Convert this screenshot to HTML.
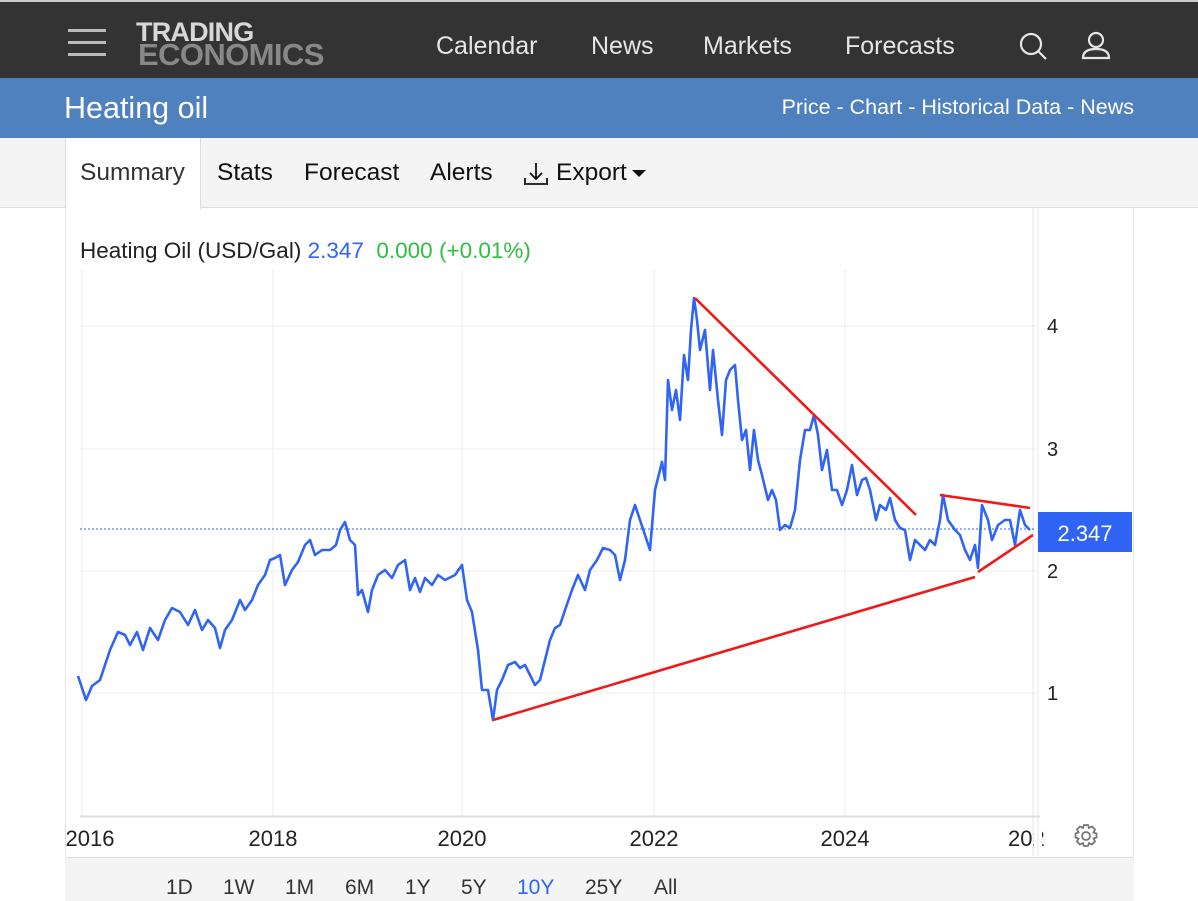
<!DOCTYPE html>
<html><head><meta charset="utf-8"><style>
*{margin:0;padding:0;box-sizing:border-box}
body{width:1198px;height:901px;overflow:hidden;background:#fff;font-family:"Liberation Sans",Arial,sans-serif;position:relative}
.top{position:absolute;left:0;top:0;width:1198px;height:78px;background:#333}
.nav{position:absolute;top:32px;font-size:25px;color:#e6e6e6}
.blue{position:absolute;left:0;top:78px;width:1198px;height:60px;background:#4e81bd}
.tabs{position:absolute;left:0;top:138px;width:1198px;height:70px;background:#f4f4f4;border-bottom:1px solid #ddd}
.tab{position:absolute;top:21px;font-size:24.5px;color:#111}
.rng{position:absolute;left:65px;top:857px;width:1069px;height:44px;background:#f4f4f4;border-top:1px solid #e0e0e0}
.rng span{position:absolute;top:18px;font-size:21px;color:#333}
</style></head><body>
<div class="top">
 <div style="position:absolute;left:0;top:0;width:1198px;height:2px;background:#ccc"></div>
 <div style="position:absolute;left:68px;top:29px;width:38px;height:3px;background:#bbb;box-shadow:0 12px 0 #bbb,0 24px 0 #bbb"></div>
 <div style="position:absolute;left:136px;top:20px;font-size:27px;font-weight:bold;color:#d8d8d8;line-height:24px;letter-spacing:-0.8px">TRADING</div>
 <div style="position:absolute;left:138px;top:42px;font-size:31px;font-weight:bold;color:#888;line-height:26px;letter-spacing:-0.6px">ECONOMICS</div>
 <div class="nav" style="left:436px">Calendar</div>
 <div class="nav" style="left:591px">News</div>
 <div class="nav" style="left:703px">Markets</div>
 <div class="nav" style="left:845px">Forecasts</div>
 <svg style="position:absolute;left:1018px;top:31px" width="32" height="32" viewBox="0 0 32 32" fill="none" stroke="#e6e6e6" stroke-width="2.2"><circle cx="13" cy="13" r="10"/><path d="M20 20l8 8"/></svg>
 <svg style="position:absolute;left:1080px;top:31px" width="32" height="30" viewBox="0 0 32 30" fill="none" stroke="#e6e6e6" stroke-width="2.2"><circle cx="16" cy="9" r="7"/><path d="M3 27c0-7 6-9 13-9s13 2 13 9z"/></svg>
</div>
<div class="blue">
 <div style="position:absolute;left:64px;top:13px;font-size:30.5px;color:#fff">Heating oil</div>
 <div style="position:absolute;right:64px;top:17px;font-size:21.5px;color:#fff">Price - Chart - Historical Data - News</div>
</div>
<div class="tabs">
 <div style="position:absolute;left:65px;top:0;width:136px;height:71px;background:#fff;border-left:1px solid #ddd;border-right:1px solid #ddd"></div>
 <div class="tab" style="left:80px;color:#333">Summary</div>
 <div class="tab" style="left:217px">Stats</div>
 <div class="tab" style="left:304px">Forecast</div>
 <div class="tab" style="left:430px">Alerts</div>
 <svg style="position:absolute;left:523px;top:23px" width="26" height="26" viewBox="0 0 26 26" fill="none" stroke="#111" stroke-width="1.8"><path d="M13 2v16M7 12l6 6 6-6M2 17v6h22v-6"/></svg>
 <div class="tab" style="left:556px">Export</div>
 <div style="position:absolute;left:632px;top:32px;border-left:7px solid transparent;border-right:7px solid transparent;border-top:7px solid #111"></div>
</div>
<div style="position:absolute;left:65px;top:208px;width:1px;height:649px;background:#e4e4e4"></div>
<div style="position:absolute;left:1133px;top:208px;width:1px;height:649px;background:#e4e4e4"></div>
<div style="position:absolute;left:80px;top:238px;font-size:22.5px;color:#222">Heating Oil (USD/Gal) <span style="color:#2f64f5">2.347</span>&nbsp; <span style="color:#2fbf3f">0.000 (+0.01%)</span></div>
<svg style="position:absolute;left:0;top:0" width="1198" height="901">
 <g stroke="#ececec" stroke-width="1">
  <path d="M80 326H1036M80 449H1036M80 571H1036M80 693H1036"/>
  <path d="M82 270V816M273 270V816M462 270V816M654 270V816M845 270V816"/>
 </g>
 <path d="M80 816.5H1040" stroke="#ddd" stroke-width="2"/>
 <path d="M1033 208V856M1038 208V856" stroke="#e4e4e4"/>
 <path d="M80 529H1036" stroke="#2f64f5" stroke-dasharray="2 2" stroke-width="1"/>
 <polyline fill="none" stroke="#2f64f5" stroke-width="2.6" stroke-linejoin="round" points="78,676 86,700 92,686 100,680 105,665 110,650 118,632 125,635 130,645 137,632 143,650 150,628 158,640 165,620 172,608 180,612 188,625 195,610 202,630 208,620 215,628 220,648 225,630 232,620 240,600 245,610 252,600 258,585 265,575 270,560 275,558 280,555 285,585 292,570 298,562 305,545 310,540 315,555 322,550 330,550 336,545 340,530 345,522 350,540 355,545 358,595 362,590 368,612 372,590 378,575 385,570 392,578 398,565 405,560 410,590 415,578 420,592 425,578 432,585 438,575 445,580 455,575 462,565 467,600 472,612 478,650 482,690 488,690 493,720 497,690 502,680 508,665 515,662 520,668 525,665 530,675 535,685 540,680 545,660 550,640 555,628 560,625 565,610 572,590 578,575 585,590 590,570 597,560 603,548 610,550 615,555 620,580 625,560 630,520 635,505 640,520 645,535 650,550 655,490 662,462 665,480 668,380 672,410 676,390 680,420 684,355 688,380 691,330 694,298 697,320 700,350 705,330 710,390 713,350 718,400 722,435 726,380 730,370 735,365 738,400 742,440 746,430 750,470 754,430 758,460 762,475 768,500 772,490 776,500 780,530 785,525 790,528 795,510 800,460 805,430 810,430 814,415 818,435 822,470 827,450 832,490 837,490 842,505 847,490 852,465 857,495 862,480 866,478 870,490 876,520 880,505 886,510 890,498 895,520 900,528 905,530 910,560 915,540 920,545 925,550 930,540 935,545 940,520 943,495 948,520 955,530 960,535 965,550 970,560 975,545 978,568 982,505 988,520 992,540 998,525 1005,520 1010,520 1015,545 1020,510 1025,525 1030,530"/>
 <g stroke="#f01818" stroke-width="2.6" fill="none">
  <path d="M493 720L975 577"/>
  <path d="M695 298L916 515"/>
  <path d="M940 495L1030 508"/>
  <path d="M978 572L1033 535"/>
 </g>
 <rect x="1038" y="512" width="94" height="40" fill="#2f64f5"/>
 <text x="1085" y="541" fill="#fff" font-size="22" text-anchor="middle" font-family="Liberation Sans">2.347</text>
 <g font-family="Liberation Sans" font-size="20" fill="#222">
  <text x="1047" y="333">4</text><text x="1047" y="456">3</text><text x="1047" y="578">2</text><text x="1047" y="700">1</text>
 </g>
 <g font-family="Liberation Sans" font-size="22" fill="#222" text-anchor="middle">
  <text x="90" y="846">2016</text><text x="273" y="846">2018</text><text x="462" y="846">2020</text><text x="654" y="846">2022</text><text x="845" y="846">2024</text>
 </g>
 <text x="1008" y="846" font-family="Liberation Sans" font-size="22" fill="#222">202</text>
 <rect x="1034" y="825" width="8" height="30" fill="#fff"/>
 <path d="M1038 818V856" stroke="#e4e4e4"/>
 <g transform="translate(1086,836)" fill="none" stroke="#777" stroke-width="1.8">
  <circle r="4"/>
  <path d="M-2 -11h4l1 3 3-1.5 3 3-1.5 3 3 1v4l-3 1 1.5 3-3 3-3-1.5-1 3h-4l-1-3-3 1.5-3-3 1.5-3-3-1v-4l3-1-1.5-3 3-3 3 1.5z"/>
 </g>
</svg>
<div class="rng">
 <span style="left:101px">1D</span><span style="left:158px">1W</span><span style="left:220px">1M</span><span style="left:280px">6M</span><span style="left:340px">1Y</span><span style="left:396px">5Y</span><span style="left:452px;color:#2f64f5">10Y</span><span style="left:520px">25Y</span><span style="left:589px">All</span>
</div>
</body></html>
